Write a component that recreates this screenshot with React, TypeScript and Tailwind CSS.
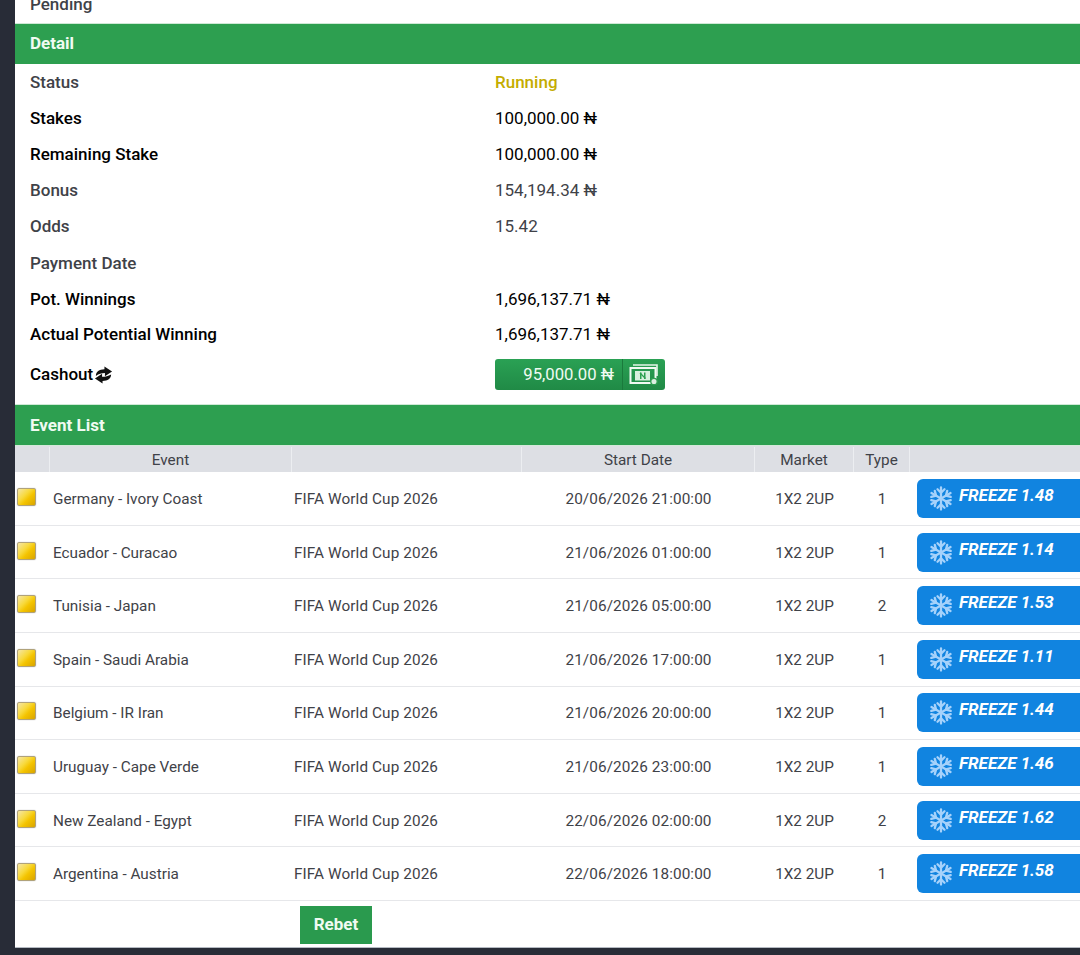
const rows = [
  ["Germany - Ivory Coast", "20/06/2026 21:00:00", "1", "1.48"],
  ["Ecuador - Curacao", "21/06/2026 01:00:00", "1", "1.14"],
  ["Tunisia - Japan", "21/06/2026 05:00:00", "2", "1.53"],
  ["Spain - Saudi Arabia", "21/06/2026 17:00:00", "1", "1.11"],
  ["Belgium - IR Iran", "21/06/2026 20:00:00", "1", "1.44"],
  ["Uruguay - Cape Verde", "21/06/2026 23:00:00", "1", "1.46"],
  ["New Zealand - Egypt", "22/06/2026 02:00:00", "2", "1.62"],
  ["Argentina - Austria", "22/06/2026 18:00:00", "1", "1.58"],
];

const details: [string, string, boolean, string][] = [
  ["Status", "Running", false, "h-[36px]"],
  ["Stakes", "100,000.00 ₦", true, "h-[36px]"],
  ["Remaining Stake", "100,000.00 ₦", true, "h-[36px]"],
  ["Bonus", "154,194.34 ₦", false, "h-[36px]"],
  ["Odds", "15.42", false, "h-[36px]"],
  ["Payment Date", "", false, "h-[37px] pt-[3px]"],
  ["Pot. Winnings", "1,696,137.71 ₦", true, "h-[36px] pt-[1px]"],
  ["Actual Potential Winning", "1,696,137.71 ₦", true, "h-[35px] pt-[1px]"],
];

const gridCols = "grid grid-cols-[35px_242px_230px_233px_99px_56px_1fr]";

function SectionHeader({ title, pad }: { title: string; pad: string }) {
  return (
    <div className={`h-[41px] bg-[#2d9f50] pl-[15px] ${pad} flex items-center text-[17px] font-bold text-[#f0fbf2] border-t border-[#cfe9d6]`}>
      {title}
    </div>
  );
}

function CashoutIcon() {
  return (
    <svg viewBox="0 0 20 20" className="w-[19px] h-[22px] text-[#111]" fill="currentColor">
      <path d="M2 11C2 6.500 5.500 4.200 11 4V1l8 5.200-7.500 5V8C8 8 5 8.800 2 11z" />
      <path d="M18 9.500c0 4.500-3.500 6.500-9 6.700V19l-8-5.200 7.500-5v3.100c3.500 0 6.500-.6 9.500-2.400z" />
    </svg>
  );
}

function MoneyIcon() {
  return (
    <svg viewBox="0 0 30 24" className="w-[30px] h-[24px]" fill="none">
      <path d="M4 3h24v11" stroke="#e4f5e9" strokeWidth="1.6" />
      <rect x="1.500" y="6" width="25" height="15" stroke="#f0faf3" strokeWidth="2" />
      <rect x="6" y="9" width="15" height="9.500" fill="#d8f0de" />
      <rect x="11" y="10.500" width="1.500" height="6.500" fill="#2d9f50" />
      <rect x="15" y="10.500" width="1.500" height="6.500" fill="#2d9f50" />
      <path d="M11 11l5.500 5.500" stroke="#2d9f50" strokeWidth="1.300" />
      <circle cx="25" cy="19.500" r="3.200" fill="#dcefe2" stroke="#2d9f50" strokeWidth="1.300" />
    </svg>
  );
}

function Snowflake() {
  return (
    <svg viewBox="0 0 24 24" className="w-[24px] h-[25px] mt-[3px] text-[#a6d2fb]" fill="none" stroke="currentColor" strokeWidth="2.300" strokeLinecap="round" strokeLinejoin="round">
      {[0, 60, 120, 180, 240, 300].map((a) => (
        <g key={a} transform={`rotate(${a} 12 12)`}>
          <path d="M12 12V1" />
          <path d="M8.500 2.800L12 6.300L15.500 2.800" />
        </g>
      ))}
    </svg>
  );
}

function GoldBox() {
  return (
    <div className="w-[19px] h-[18px] rounded-[2px] border border-[#b0a27a] bg-[linear-gradient(135deg,#f5e6a8_0%,#f8d93a_40%,#f4c400_60%,#d9a400_100%)] shadow-[0_0_1px_rgba(0,0,0,0.4)]" />
  );
}

export default function App() {
  return (
    <div
      className="h-[955px] w-[1080px] overflow-hidden bg-[#282c37] pl-[15px] pb-[7px]"
      style={{ fontFamily: "Roboto, 'Noto Sans', sans-serif" }}
    >
      <div className="h-full bg-white overflow-hidden text-[#3f4248] border-b border-[#b5bac2]">
        <div className="-mt-[14px] h-[37px] pl-[15px] flex items-center text-[17px] font-medium">Pending</div>
        <SectionHeader title="Detail" pad="pt-0" />
        {details.map(([label, value, strong, h]) => (
          <div key={label} className={`${h.includes("pt-") ? h : `${h} pt-[1px]`} grid grid-cols-[480px_1fr] items-center text-[17px]`}>
            <div className={`pl-[15px] font-medium ${strong ? "text-black" : ""}`}>{label}</div>
            <div className={label === "Status" ? "font-medium text-[#c4ac00]" : strong ? "text-black" : ""}>{value}</div>
          </div>
        ))}
        <div className="h-[52px] pb-[7px] grid grid-cols-[480px_1fr] items-center text-[17px]">
          <div className="pl-[15px] font-medium text-black flex items-center gap-[1px]">
            Cashout
            <CashoutIcon />
          </div>
          <div className="w-[170px] h-[31px] -mt-[1px] rounded-[3px] bg-[linear-gradient(180deg,#2aa154,#208a46)] flex items-center text-[16.7px] text-[#f0fbf2]">
            <div className="w-[128px] pr-[8px] pt-[1px] text-right h-full flex items-center justify-end border-r border-[#1a7a3c]">95,000.00 ₦</div>
            <div className="flex-1 flex items-center justify-center">
              <MoneyIcon />
            </div>
          </div>
        </div>
        <SectionHeader title="Event List" pad="pt-[1px]" />
        <div className={`${gridCols} h-[27.15px] pt-[1px] bg-[#dddfe4] text-[15.3px] text-center items-stretch border-t border-[#d3e9d9]`}>
          {["", "Event", "", "Start Date", "Market", "Type", ""].map((t, i) => (
            <div key={i} className={`flex items-center justify-center pt-[1px] ${i < 6 ? "border-r border-[#eceef1]" : ""}`}>
              {t}
            </div>
          ))}
        </div>
        {rows.map(([event, date, type, odd]) => (
          <div key={event} className={`${gridCols} h-[53.6px] items-center text-[15.3px] border-b border-[#e6e7ea]`}>
            <div className="pl-[2px] -mt-[3px]">
              <GoldBox />
            </div>
            <div className="pl-[3px] pt-[2px]">{event}</div>
            <div className="pl-[2px] pt-[2px] tracking-[0.1px]">FIFA World Cup 2026</div>
            <div className="text-center pt-[2px] tracking-[0.1px]">{date}</div>
            <div className="text-center pt-[2px]">1X2 2UP</div>
            <div className="text-center pt-[2px]">{type}</div>
            <div className="pl-[7px]">
              <div className="h-[39px] rounded-l-[6px] bg-[#1184e0] flex items-start pl-[12px] pt-[4px] gap-[6px] text-white italic font-bold text-[17px]">
                <Snowflake />
                <span>{`FREEZE ${odd}`}</span>
              </div>
            </div>
          </div>
        ))}
        <div className="pl-[285px] pt-[5px]">
          <button className="w-[72px] h-[38px] bg-[#2a9a4e] text-[#f0fbf2] font-bold text-[17px]">Rebet</button>
        </div>
      </div>
    </div>
  );
}
